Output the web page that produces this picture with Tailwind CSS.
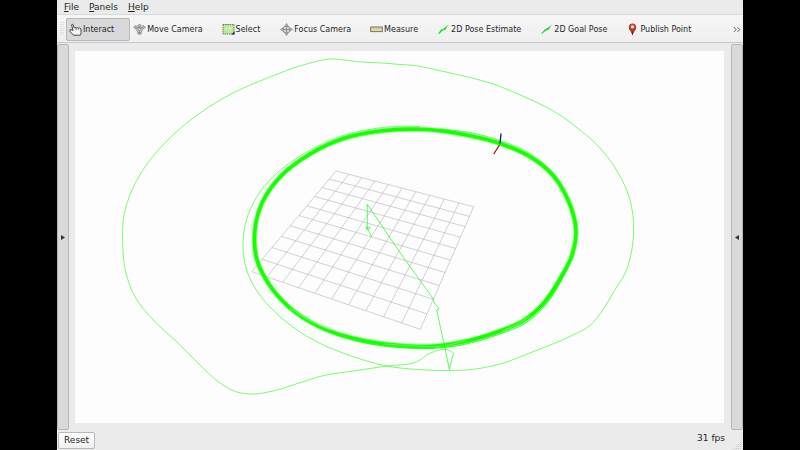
<!DOCTYPE html>
<html lang="en">
<head>
<meta charset="utf-8">
<title>RViz</title>
<script src="https://cdn.jsdelivr.net/npm/@tailwindcss/browser@4"></script>
</head>
<body class="bg-black">
<div class="flex h-screen flex-col bg-black px-[57px] font-['DejaVu_Sans',sans-serif] text-[#262626]">
  <div class="flex min-h-0 flex-1 flex-col bg-[#ebebeb]">
    <nav class="flex h-[14px] items-center gap-[10px] px-[7px] text-[9px] leading-[14px]" aria-label="Menu">
      <button><span class="underline">F</span>ile</button>
      <button><span class="underline">P</span>anels</button>
      <button><span class="underline">H</span>elp</button>
    </nav>
    <div class="flex h-[29px] items-center border-t border-b border-t-[#dad9dc] border-b-[#c8c7cc] bg-linear-to-b from-[#f6f6f7] to-[#efeff0] pt-px pr-[2px] pl-[3px] text-[8px] whitespace-nowrap" role="toolbar">
      <svg class="mr-[2px] h-[14px] w-1 shrink-0" viewBox="0 0 4 14" aria-hidden="true"><path d="M1 0V14M3 0V14" stroke="#d0d0d2" stroke-dasharray="1 1"/></svg>
      <button class="flex h-[23px] items-center rounded-[2px] border border-[#b9b8bb] bg-[#d9d8da] pr-[15px] pl-[2px]">
        <svg class="mr-px h-[13px] w-[13px]" viewBox="0 0 13 13" fill="#f4f4f4" stroke="#444" stroke-width="1" stroke-linejoin="round"><path d="M4 7.500L2.600 2Q3 .6 4 1.500L5.300 5.200L6 4.400L7.200 5.200L8.200 4.500L9.300 5.300L10.500 4.800L12 6V10.500L11.300 12.200H4.500L1 8.500V6.700H2.200Z"/><path d="M7.200 5.200V7M9.300 5.300V7" stroke-width=".6"/></svg><span class="pt-px">Interact</span></button>
      <button class="flex h-[23px] items-center pr-4 pl-[3px]">
        <svg class="mr-px h-[13px] w-[13px]" viewBox="0 0 13 13" fill="#ddd" stroke="#858585" stroke-width=".9"><path d="M6.500 1L8.500 3H4.500ZM6.500 12L8.500 10H4.500ZM.6 4.400L3 2.500V6ZM12.400 4.400L10 2.500V6Z"/><path d="M3 4.300H10M4.300 4.500L3.800 7.500L5 9.500H8L9.200 7.500L8.700 4.500M6.500 3V10"/><circle cx="6.500" cy="6.500" r="1.500"/></svg><span class="pt-px">Move Camera</span></button>
      <button class="flex h-[23px] items-center pr-4 pl-[3px]">
        <svg class="mr-px h-[13px] w-[13px]" viewBox="0 0 13 13"><rect x="1" y="1.500" width="11" height="9.500" fill="#b7eaa0" stroke="#72643f" stroke-width=".9" stroke-dasharray="1.500 .7"/><path d="M3 7L5 4M6 8L8 4M8.500 7L10 4" stroke="#d7f5c9"/><path d="M12.500 8.500V11.500H9.500Z" fill="#111"/></svg><span class="pt-px">Select</span></button>
      <button class="flex h-[23px] items-center pr-4 pl-1">
        <svg class="mr-px h-[13px] w-[13px]" viewBox="0 0 13 13" fill="#d5d5d5" stroke="#8a8a8a" stroke-width=".9"><circle cx="6.500" cy="6.500" r="3.600"/><path d="M6.500 .5L8 3H5ZM6.500 12.500L8 10H5ZM.5 6.500L3 5V8ZM12.500 6.500L10 5V8Z"/><path d="M6.500 3V10M3 6.500H10"/></svg><span class="pt-px">Focus Camera</span></button>
      <button class="flex h-[23px] items-center pr-4 pl-[3px]">
        <svg class="mr-px h-[13px] w-[13px]" viewBox="0 0 13 13"><rect x=".7" y="4" width="11.600" height="4.600" fill="#dcdca8" stroke="#77775c"/><path d="M3 4.500V6M5 4.500V6M7 4.500V6M9 4.500V6M11 4.500V6" stroke="#a5a57d" stroke-width=".6"/></svg><span class="pt-px">Measure</span></button>
      <button class="flex h-[23px] items-center pr-4 pl-[3px]">
        <svg class="mr-px h-[13px] w-[13px]" viewBox="0 0 13 13"><path d="M1 10.800L4.300 6L5.300 6.500L11.800 1.500L8 7.200L6.500 7L2 11Z" fill="#20e52c"/></svg><span class="pt-px">2D Pose Estimate</span></button>
      <button class="flex h-[23px] items-center pr-4 pl-[3px]">
        <svg class="mr-px h-[13px] w-[13px]" viewBox="0 0 13 13"><path d="M1 10.500L5 6.200L6 6.500L12 1.500L8.500 7L7 7L2 10.800Z" fill="#20e52c"/><path d="M5 7L9 4.500" stroke="#229c2a" stroke-width=".7"/></svg><span class="pt-px">2D Goal Pose</span></button>
      <button class="flex h-[23px] items-center pr-4 pl-[3px]">
        <svg class="mr-px h-[13px] w-[13px]" viewBox="0 0 13 13"><path d="M6.500 12.500Q5.500 9 3.200 6.500Q1.500 1 6.500 .5Q11.500 1 9.800 6.500Q7.500 9 6.500 12.500Z" fill="#a6402a"/><path d="M5.500 8.500H7.500L6.500 12.500Z" fill="#4c3226"/><path d="M3 4Q3.400 .7 6.500 .7Q9.600 .7 10 4Z" fill="#d63c31"/><circle cx="6.500" cy="3.900" r="1.600" fill="#f2dcd7"/></svg><span class="pt-px">Publish Point</span></button>
      <button class="ml-auto" aria-label="More tools"><svg class="h-[7px] w-2" viewBox="0 0 8 7" fill="none" stroke="#444" stroke-width=".9"><path d="M1 1.200L3.200 3.500L1 5.800M4.500 1.200L6.700 3.500L4.500 5.800"/></svg></button>
    </div>
    <main class="flex min-h-0 flex-1 pt-px">
      <button class="flex w-3 shrink-0 items-center justify-center rounded-[2px] border border-[#b7b6b9] bg-[#d9d8da]" aria-label="Show left panel"><svg class="h-[5px] w-1" viewBox="0 0 4 5"><path d="M0 0L4 2.500L0 5Z" fill="#333"/></svg></button>
      <div class="min-w-0 flex-1 py-[7px] pr-[7px] pl-[6px]">
        <svg class="block h-full w-full bg-[#fdfdfe]" viewBox="75 51 649 372" fill="none" stroke-linejoin="round" role="img" aria-label="3D view">
          <path id="grid" stroke="#b4b4b8" stroke-width=".6"/>
          <g id="trails" stroke="#19fb0a"></g>
          <path d="M501 133.500L500 143.500" stroke="#15157e" stroke-width="1.300"/>
          <path d="M499.500 145L493.700 154" stroke="#b00c0c" stroke-width="1.300"/>
        </svg>
      </div>
      <button class="flex w-3 shrink-0 items-center justify-center rounded-[2px] border border-[#b7b6b9] bg-[#d9d8da]" aria-label="Show right panel"><svg class="h-[5px] w-1" viewBox="0 0 4 5"><path d="M4 0L0 2.500L4 5Z" fill="#333"/></svg></button>
    </main>
    <footer class="flex h-5 shrink-0 items-start justify-between pl-px text-[9px]">
      <button class="mt-[2px] h-[17px] rounded-[2px] border border-[#b8b8ba] bg-linear-to-b from-white to-[#f0f0f1] px-[5px] leading-[15px]">Reset</button>
      <div class="flex h-full gap-[9px]"><span class="leading-[16px]">31 fps</span>
        <svg class="h-2 w-[9px] self-end" viewBox="0 0 9 8" fill="#c6c6c8"><path d="M6 0h1v1h-1zM4 2h1v1h-1zM6 2h1v1h-1zM2 4h1v1h-1zM4 4h1v1h-1zM6 4h1v1h-1zM0 6h1v1h-1zM2 6h1v1h-1zM4 6h1v1h-1zM6 6h1v1h-1z"/></svg></div>
    </footer>
  </div>
</div>
<script>
  // Ground plane: 10x10 cells projected onto the four visible corners.
  const A = [336, 171], B = [473.7, 206.7], C = [420.3, 329.3], D = [251.7, 271.7];
  const sx = A[0] - B[0] + C[0] - D[0], sy = A[1] - B[1] + C[1] - D[1];
  const ax = B[0] - C[0], bx = D[0] - C[0], ay = B[1] - C[1], by = D[1] - C[1];
  const det = ax * by - bx * ay, g = (sx * by - bx * sy) / det, h = (ax * sy - sx * ay) / det;
  const project = (u, v) => {
    const w = g * u + h * v + 1;
    const f = i => ((B[i] - A[i] + g * B[i]) * u + (D[i] - A[i] + h * D[i]) * v + A[i]) / w;
    return f(0).toFixed(1) + ' ' + f(1).toFixed(1);
  };
  let d = '';
  for (let i = 0; i <= 10; i++) {
    const t = i / 10;
    d += `M${project(t, 0)}L${project(t, 1)}M${project(0, t)}L${project(1, t)}`;
  }
  document.getElementById('grid').setAttribute('d', d);

  // Smooth curve through a list of points, with tangents weighted by chord length.
  const smooth = (p, closed) => {
    const n = p.length, at = i => closed ? p[(i + n) % n] : p[Math.max(0, Math.min(n - 1, i))];
    const dist = (a, b) => Math.hypot(b[0] - a[0], b[1] - a[1]);
    const tangent = i => {
      const a = at(i - 1), b = at(i), c = at(i + 1), u = dist(a, b), v = dist(b, c);
      if (!u || !v) return [0, 1].map(k => (c[k] - a[k]) / (u + v));
      return [0, 1].map(k => ((b[k] - a[k]) / u * v + (c[k] - b[k]) / v * u) / (u + v));
    };
    let s = 'M' + p[0];
    for (let i = 0; i < (closed ? n : n - 1); i++) {
      const b = at(i), c = at(i + 1), m = tangent(i), q = tangent(i + 1), l = dist(b, c) / 3;
      s += `C${b[0] + m[0] * l} ${b[1] + m[1] * l} ${c[0] - q[0] * l} ${c[1] - q[1] * l} ${c[0]} ${c[1]}`;
    }
    return s;
  };
  const trails = document.getElementById('trails');
  const draw = (path, width, opacity, color) => {
    const el = document.createElementNS('http://www.w3.org/2000/svg', 'path');
    el.setAttribute('d', path);
    el.setAttribute('stroke-width', width);
    el.setAttribute('opacity', opacity);
    if (color) el.setAttribute('stroke', color);
    trails.append(el);
  };
  const loop = [[420,129.3],[380,131],[343.5,138.5],[310,154],[280,177],[262,203],[254.7,232],[257,260],[269.5,285],[290,308],[320,327],[363,340.5],[400,345.5],[433,346.2],[455,343.5],[500,331],[523,321],[543,304],[560,279],[571.7,256],[576,233],[566.7,197],[550,172],[530,156.7],[500,143.5],[466.7,135]];
  draw(smooth(loop, true), 5.4, .4);
  draw(smooth(loop, true), 3.6, 1, '#16ff00');
  draw(smooth([[262,274],[276,294],[296,314],[325,330.5],[363,342.5],[400,347.5],[433,348.3],[456,346],[500,334],[525,323.5],[545,306],[561,281],[573,256]]), 1, .8);
  draw(smooth([[290,308],[306,318.5],[330,330]]), .7, .5, '#fff');
  draw(smooth([[385,344],[420,346.3],[440,346.3],[466,341]]), .6, .45, '#fff');
  draw(smooth([[502,331],[518,324],[530,316]]), .7, .5, '#fff');
  draw(smooth([[440,129],[470,132.5],[500,140.5],[530,153.5],[548,168],[562,187]]), 1, .65);

  const outer = [[420,126.5],[400,126.2],[380,127.8],[346.7,134.5],[301.7,155],[273,176.7],[256.7,197],[246.7,219],[243,243],[247.3,272],[258.3,293],[280,316.7],[310,338],[353.3,356.7],[386.7,366],[420,369.7],[445,370.5],[466.7,370],[500,364],[533,351.7],[572,335.5],[590,325.5],[602,311],[613,293],[626.5,270],[632.3,247],[633.7,230],[630,200],[618.3,173],[600,148],[580,130],[556.7,113],[527,98],[490,83],[455,74],[430,68.5],[415,65.5],[398,64.3],[383,63],[366,62.3],[350,60.7],[330,59],[306.7,64],[266.7,78.3],[233,93],[200,113],[173,135],[150,160],[132,190],[123.7,217],[122.7,240],[125.3,270],[134,295],[153.3,320],[176.7,341.7],[200,365],[220,383],[236.7,392],[253,394],[273,391],[300,382.7],[326,375],[350,371.5],[386.7,366],[416.7,361.7],[430,353.3],[448,350],[453.5,353]];
  draw(smooth(outer), .9, .65);
  draw('M453.5 353L449.3 369.5L445 348.5L436.7 310L439 309L438 307L435 304L432.7 298L400 252.7L367.3 204.3L367.3 228L371.7 237M366 227L370 227.5L367 230Z', .9, .75);
</script>
</body>
</html>
